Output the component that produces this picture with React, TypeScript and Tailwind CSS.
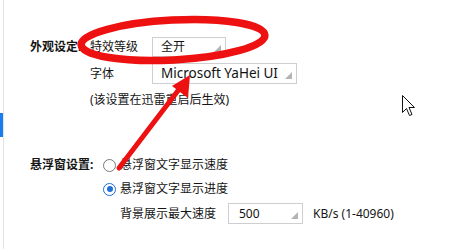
import React from "react";

const Corner = () => (
    <svg width="7" height="7" viewBox="0 0 7 7" className="absolute right-[4px] bottom-[4px]">
        <polygon points="7,0 7,7 0,7" fill="#b4b4b4" />
    </svg>
);

const Select = ({
    value,
    className,
    padLeft = "pl-[8px]",
    textSize = "text-[12px]",
}: {
    value: string;
    className: string;
    padLeft?: string;
    textSize?: string;
}) => (
    <div className={`relative flex items-center border border-[#cfcfcf] bg-white ${padLeft} ${className}`}>
        <span className={`${textSize} leading-none text-[#111]`}>{value}</span>
        <Corner />
    </div>
);

const Radio = ({ checked }: { checked?: boolean }) => (
    <span
        className={`flex h-[13px] w-[13px] items-center justify-center rounded-full border bg-white ${
            checked ? "border-[#1f6fd6]" : "border-[#7a7a7a]"
        }`}
    >
        {checked ? <span className="h-[6px] w-[6px] rounded-full bg-[#1f6fd6]" /> : null}
    </span>
);

export default function App() {
    return (
        <div className="relative flex h-[249px] w-[450px] overflow-hidden bg-white font-['Noto_Sans','Noto_Sans_CJK_SC',sans-serif] text-[12px] text-[#151515]">
            <div className="h-full w-[4px] shrink-0 border-r border-[#e4e4e4]">
                <div className="mt-[113px] h-[24px] w-[3px] bg-[#1a7cf2]" />
            </div>

            <div className="flex flex-col pl-[26px] pt-[37px]">
                <div className="flex">
                    <div className="flex h-[20px] w-[60px] items-center font-bold">外观设定:</div>
                    <div className="flex flex-col">
                        <div className="flex h-[20px] items-center">
                            <span className="w-[62px]">特效等级</span>
                            <Select value="全开" className="h-[20px] w-[74px]" />
                        </div>
                        <div className="mt-[6px] flex h-[21px] items-center">
                            <span className="w-[62px]">字体</span>
                            <Select value="Microsoft YaHei UI" textSize="text-[13.5px]" className="h-[21px] w-[145px]" />
                        </div>
                        <div className="mt-[8px] h-[16px] leading-[16px]">(该设置在迅雷重启后生效)</div>
                    </div>
                </div>

                <div className="mt-[47px] flex">
                    <div className="flex h-[20px] w-[73px] items-center font-bold">悬浮窗设置:</div>
                    <div className="flex flex-col">
                        <div className="flex h-[20px] items-center gap-[4px]">
                            <Radio />
                            <span>悬浮窗文字显示速度</span>
                        </div>
                        <div className="mt-[4px] flex h-[20px] items-center gap-[4px]">
                            <Radio checked />
                            <span>悬浮窗文字显示进度</span>
                        </div>
                        <div className="mt-[4px] flex h-[21px] items-center pl-[17px]">
                            <span className="w-[108px]">背景展示最大速度</span>
                            <Select value="500" padLeft="pl-[10px]" className="h-[21px] w-[75px]" />
                            <span className="ml-[10px]">KB/s (1-40960)</span>
                        </div>
                    </div>
                </div>
            </div>

            <svg className="pointer-events-none absolute left-0 top-0" width="450" height="249" viewBox="0 0 450 249">
                <ellipse cx="173" cy="40" rx="92" ry="20" transform="rotate(-3 173 40)" fill="none" stroke="#ee1111" strokeWidth="7.5" />
                <line x1="119" y1="168" x2="180" y2="88" stroke="#ee1111" strokeWidth="5" strokeLinecap="round" />
                <polygon points="190,75 172,86 188,98" fill="#ee1111" />
                <path
                    d="M402.5 95.5 L402.5 112.5 L406.5 108.5 L409.5 115.5 L412 114.5 L409 107.5 L414.5 107.5 Z"
                    fill="#fff"
                    stroke="#111"
                    strokeWidth="1"
                    strokeLinejoin="round"
                />
            </svg>
        </div>
    );
}
